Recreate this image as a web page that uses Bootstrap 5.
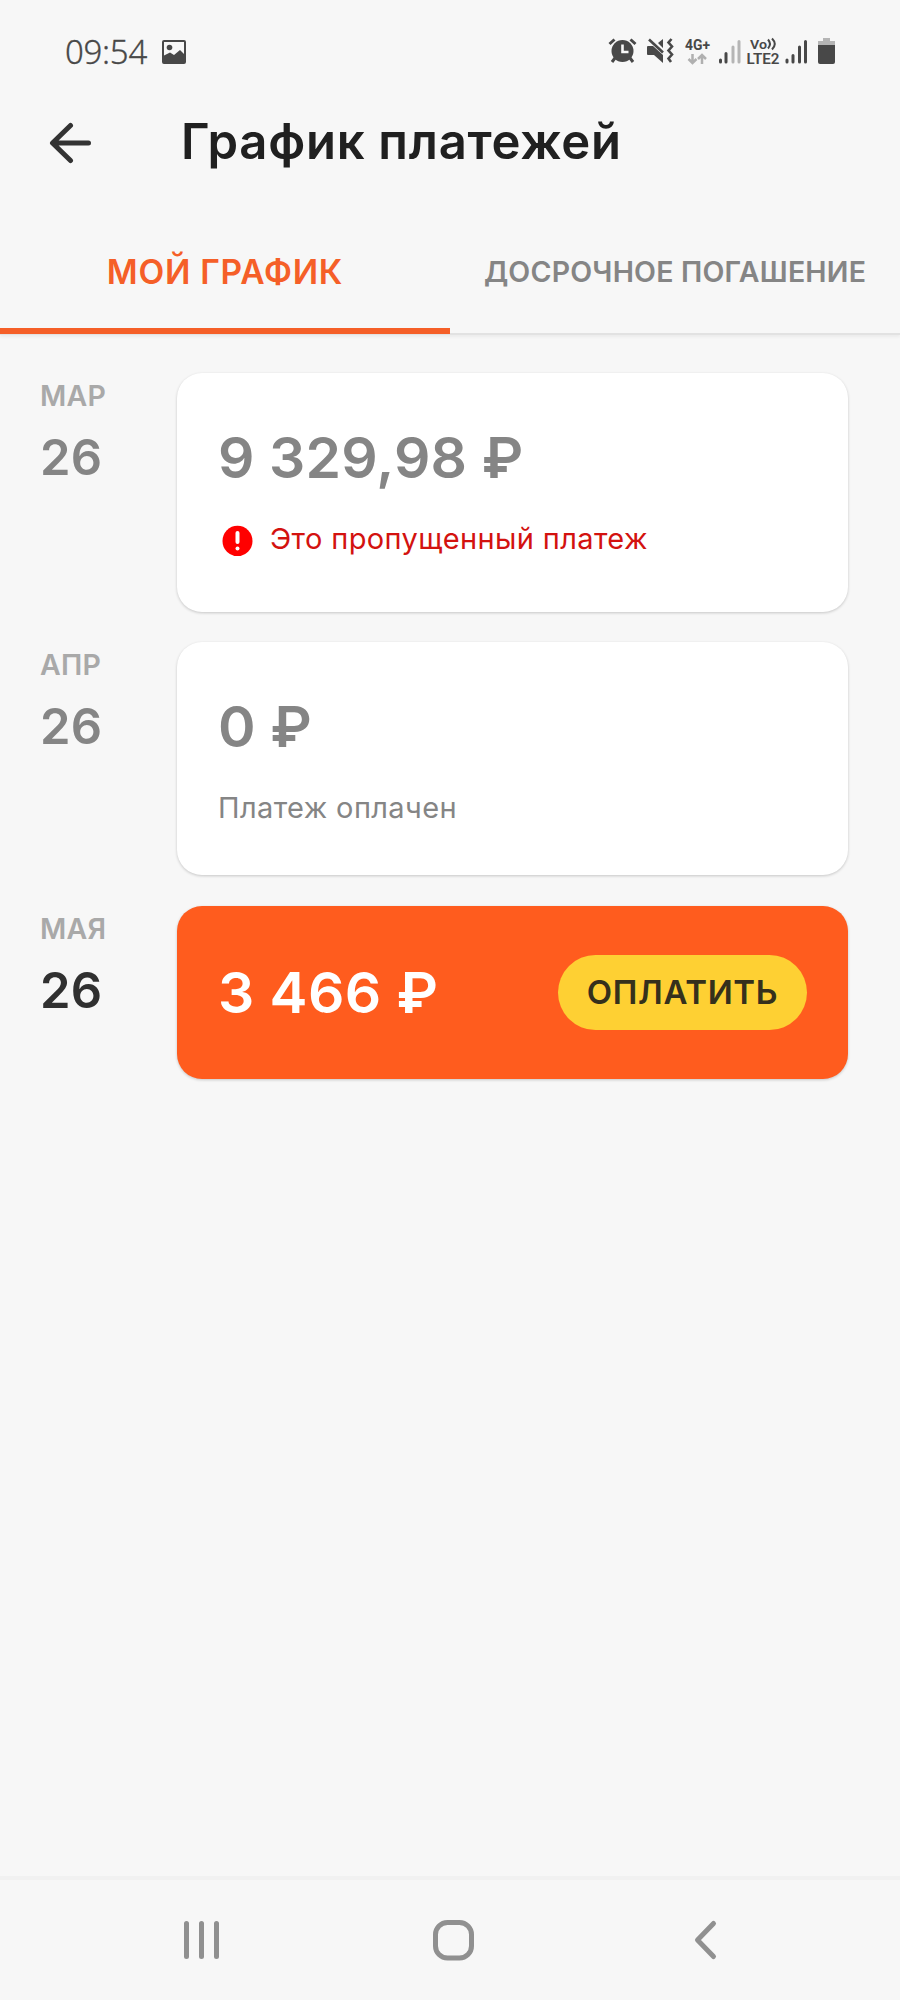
<!DOCTYPE html>
<html lang="ru">
<head>
<meta charset="utf-8">
<meta name="viewport" content="width=device-width, initial-scale=1">
<title>График платежей</title>
<link href="https://cdn.jsdelivr.net/npm/bootstrap@5.3.0/dist/css/bootstrap.min.css" rel="stylesheet">
<style>
body { background: #f7f7f7; color: #202020; font-family: Inter, Roboto, sans-serif; height: 2000px; overflow: hidden; }
svg { display: block; flex: none; }
.status-row { height: 104px; padding: 0 62px 0 65px; color: #484848; }
.clock { font: 300 33px/40px "Noto Sans", sans-serif; letter-spacing: -.3px; width: 96px; -webkit-text-stroke: .3px #484848; }
.head-row { height: 76px; padding-left: 49px; }
.page-title { font-size: 49px; line-height: 76px; font-weight: 600; margin-left: 88px; letter-spacing: .75px; white-space: nowrap; }
.plan-tabs { height: 155px; border-bottom: 2px solid #e2e2e2; box-shadow: 0 2px 3px rgba(0,0,0,.05); }
.plan-tabs .nav-link { width: 450px; height: 154px; padding: 0; line-height: 184px; text-align: center; border-bottom: 0 solid; color: #858585; font-size: 28.5px; font-weight: 600; letter-spacing: .2px; white-space: nowrap; }
.plan-tabs .nav-link.active { color: #f55f28; font-size: 33.5px; letter-spacing: .75px; border-bottom: 6px solid #f55f28; }
.plan { padding: 38px 52px 0 40px; }
.pay-row + .pay-row { margin-top: 30px; }
.pay-row + .pay-row.pay-due { margin-top: 31px; }
.date-col { width: 137px; flex: none; }
.month { font-size: 28.5px; line-height: 46px; font-weight: 600; letter-spacing: .2px; color: #a9a9a9; }
.day { font-size: 49px; line-height: 77px; font-weight: 600; letter-spacing: .3px; color: #858585; }
.pay-due .day { color: #303030; }
.pay-card { border: 0; border-radius: 25px; box-shadow: 0 1px 3px rgba(0,0,0,.2); padding: 35px 41px 0; height: 239px; }
.pay-paid .pay-card { height: 233px; }
.pay-due .pay-card { height: 173px; background: #ff5c1e; }
.sum { font-size: 57px; line-height: 100px; font-weight: 600; letter-spacing: .15px; color: #858585; white-space: nowrap; }
.pay-due .sum { letter-spacing: .45px; color: #fff; }
.note { font-size: 29px; line-height: 62px; font-weight: 400; letter-spacing: .38px; color: #858585; white-space: nowrap; }
.note-missed { color: #d3120f; }
.pay-btn { width: 249px; height: 75px; padding: 0; background: #fed033; color: #35301c; font-size: 33px; line-height: 73px; font-weight: 600; letter-spacing: .65px; border: 0; }
.sys-nav { height: 124px; border-top: 4px solid #f1f1f1; padding: 0 180px; }
.home-key { margin-left: 7px; }
</style>
</head>
<body class="d-flex flex-column">
<div class="status-row d-flex align-items-center justify-content-between">
  <div class="d-flex align-items-center">
    <span class="clock">09:54</span>
    <svg width="26" height="26" viewBox="0 0 26 26"><path fill="#484848" fill-rule="evenodd" d="M3 1h20q2 0 2 2v20q0 2-2 2H3q-2 0-2-2V3q0-2 2-2zM3 3v13.500l6-3 4 2.500 6-5 4 4V3z"/><circle cx="8.500" cy="8.500" r="2.800" fill="#484848"/></svg>
  </div>
  <svg width="232" height="36" viewBox="606 34 232 36" fill="#484848">
    <g stroke="#484848" fill="none"><path stroke-width="3" d="M609.500 44l5-4.500M635.500 44l-5-4.500"/><path stroke-width="3" d="M615 58l-3 4M630 58l3 4"/></g>
    <circle cx="622.500" cy="51" r="11"/><path d="M622.500 44.500v7.500h6" fill="none" stroke="#f7f7f7" stroke-width="2.600"/>
    <path d="M648 46h5l10 9v8l-9-8h-6q-1 0-1-1v-7q0-1 1-1zM658 43l5-4v9z"/><path d="M649 39.500l14 13" stroke="#484848" stroke-width="2.600"/>
    <path d="M671.500 39l-3 3.500 3.500 4-3.500 4 3.500 4-3.500 4 2.500 3.500" fill="none" stroke="#484848" stroke-width="2.600"/>
    <text x="685" y="50" font-family="Roboto" font-weight="700" font-size="14.500" textLength="25" lengthAdjust="spacingAndGlyphs">4G+</text>
    <path d="M692.500 54v8M688.500 59l4 4 4-4M702 64v-8M698 59l4-4 4 4" fill="none" stroke="#b0b0b0" stroke-width="2.500"/>
    <g stroke-width="3" stroke-linecap="round"><path stroke="#484848" d="M720.500 60v2M726 53.500v8.500M787 60v2M793 55.500V62M799.500 47v15M805.500 41.500V62"/><path stroke="#b5b5b5" d="M733 47v15M739 41.500V62"/></g>
    <text x="750" y="48.500" font-family="Roboto" font-weight="600" font-size="13.500" textLength="17" lengthAdjust="spacingAndGlyphs">Vo</text>
    <path d="M768 39.500q4 4.500 0 9M772 38.500q5.500 5.500 0 11" fill="none" stroke="#484848" stroke-width="2"/>
    <text x="746.500" y="63.500" font-family="Roboto" font-weight="600" font-size="14" textLength="33" lengthAdjust="spacingAndGlyphs">LTE2</text>
    <path fill="#b5b5b5" d="M818 45v-4h5v-3h7v3h5v4z"/><path d="M818 45h17v17q0 2-2 2h-13q-2 0-2-2z"/>
  </svg>
</div>
<header class="head-row d-flex align-items-center">
  <svg width="44" height="44" viewBox="0 0 44 44" fill="none" stroke="#333" stroke-width="5" stroke-linecap="round" stroke-linejoin="round"><path d="M39.500 23H4M21.500 5.500L3.500 23l18 17.500"/></svg>
  <h1 class="page-title mb-0">График платежей</h1>
</header>
<nav class="plan-tabs nav flex-nowrap">
  <a class="nav-link active" href="#">МОЙ ГРАФИК</a>
  <a class="nav-link" href="#">ДОСРОЧНОЕ ПОГАШЕНИЕ</a>
</nav>
<main class="plan flex-grow-1">
  <section class="pay-row d-flex">
    <div class="date-col"><div class="month">МАР</div><div class="day">26</div></div>
    <div class="card pay-card flex-grow-1">
      <div class="sum">9 329,98 ₽</div>
      <div class="note note-missed d-flex align-items-center">
        <svg width="52" height="34" viewBox="0 0 52 34"><ellipse cx="19.500" cy="19" rx="15" ry="15.300" fill="#f00"/><path d="M19.500 11v9" stroke="#fff" stroke-width="4" stroke-linecap="round"/><circle cx="19.500" cy="26.500" r="2" fill="#fff"/></svg>
        <span>Это пропущенный платеж</span>
      </div>
    </div>
  </section>
  <section class="pay-row pay-paid d-flex">
    <div class="date-col"><div class="month">АПР</div><div class="day">26</div></div>
    <div class="card pay-card flex-grow-1">
      <div class="sum">0 ₽</div>
      <div class="note">Платеж оплачен</div>
    </div>
  </section>
  <section class="pay-row pay-due d-flex">
    <div class="date-col"><div class="month">МАЯ</div><div class="day">26</div></div>
    <div class="card pay-card flex-grow-1 flex-row justify-content-between align-items-center py-0">
      <div class="sum">3 466 ₽</div>
      <button class="btn rounded-pill pay-btn">ОПЛАТИТЬ</button>
    </div>
  </section>
</main>
<footer class="sys-nav d-flex align-items-center justify-content-between">
  <svg width="44" height="44" viewBox="180 1918 44 44" stroke="#909090" stroke-width="5" stroke-linecap="round"><path d="M186.500 1923.500v33M201.500 1923.500v33M216.500 1923.500v33"/></svg>
  <svg class="home-key" width="44" height="44" viewBox="432 1918 44 44" fill="none" stroke="#909090" stroke-width="5"><rect x="435.500" y="1922.500" width="36" height="35.500" rx="12"/></svg>
  <svg width="44" height="44" viewBox="676 1918 44 44" fill="none" stroke="#909090" stroke-width="5" stroke-linecap="round" stroke-linejoin="round"><path d="M713.500 1923.500L697.500 1940l16 16.500"/></svg>
</footer>
<script src="https://cdn.jsdelivr.net/npm/bootstrap@5.3.0/dist/js/bootstrap.bundle.min.js"></script>
</body>
</html>
